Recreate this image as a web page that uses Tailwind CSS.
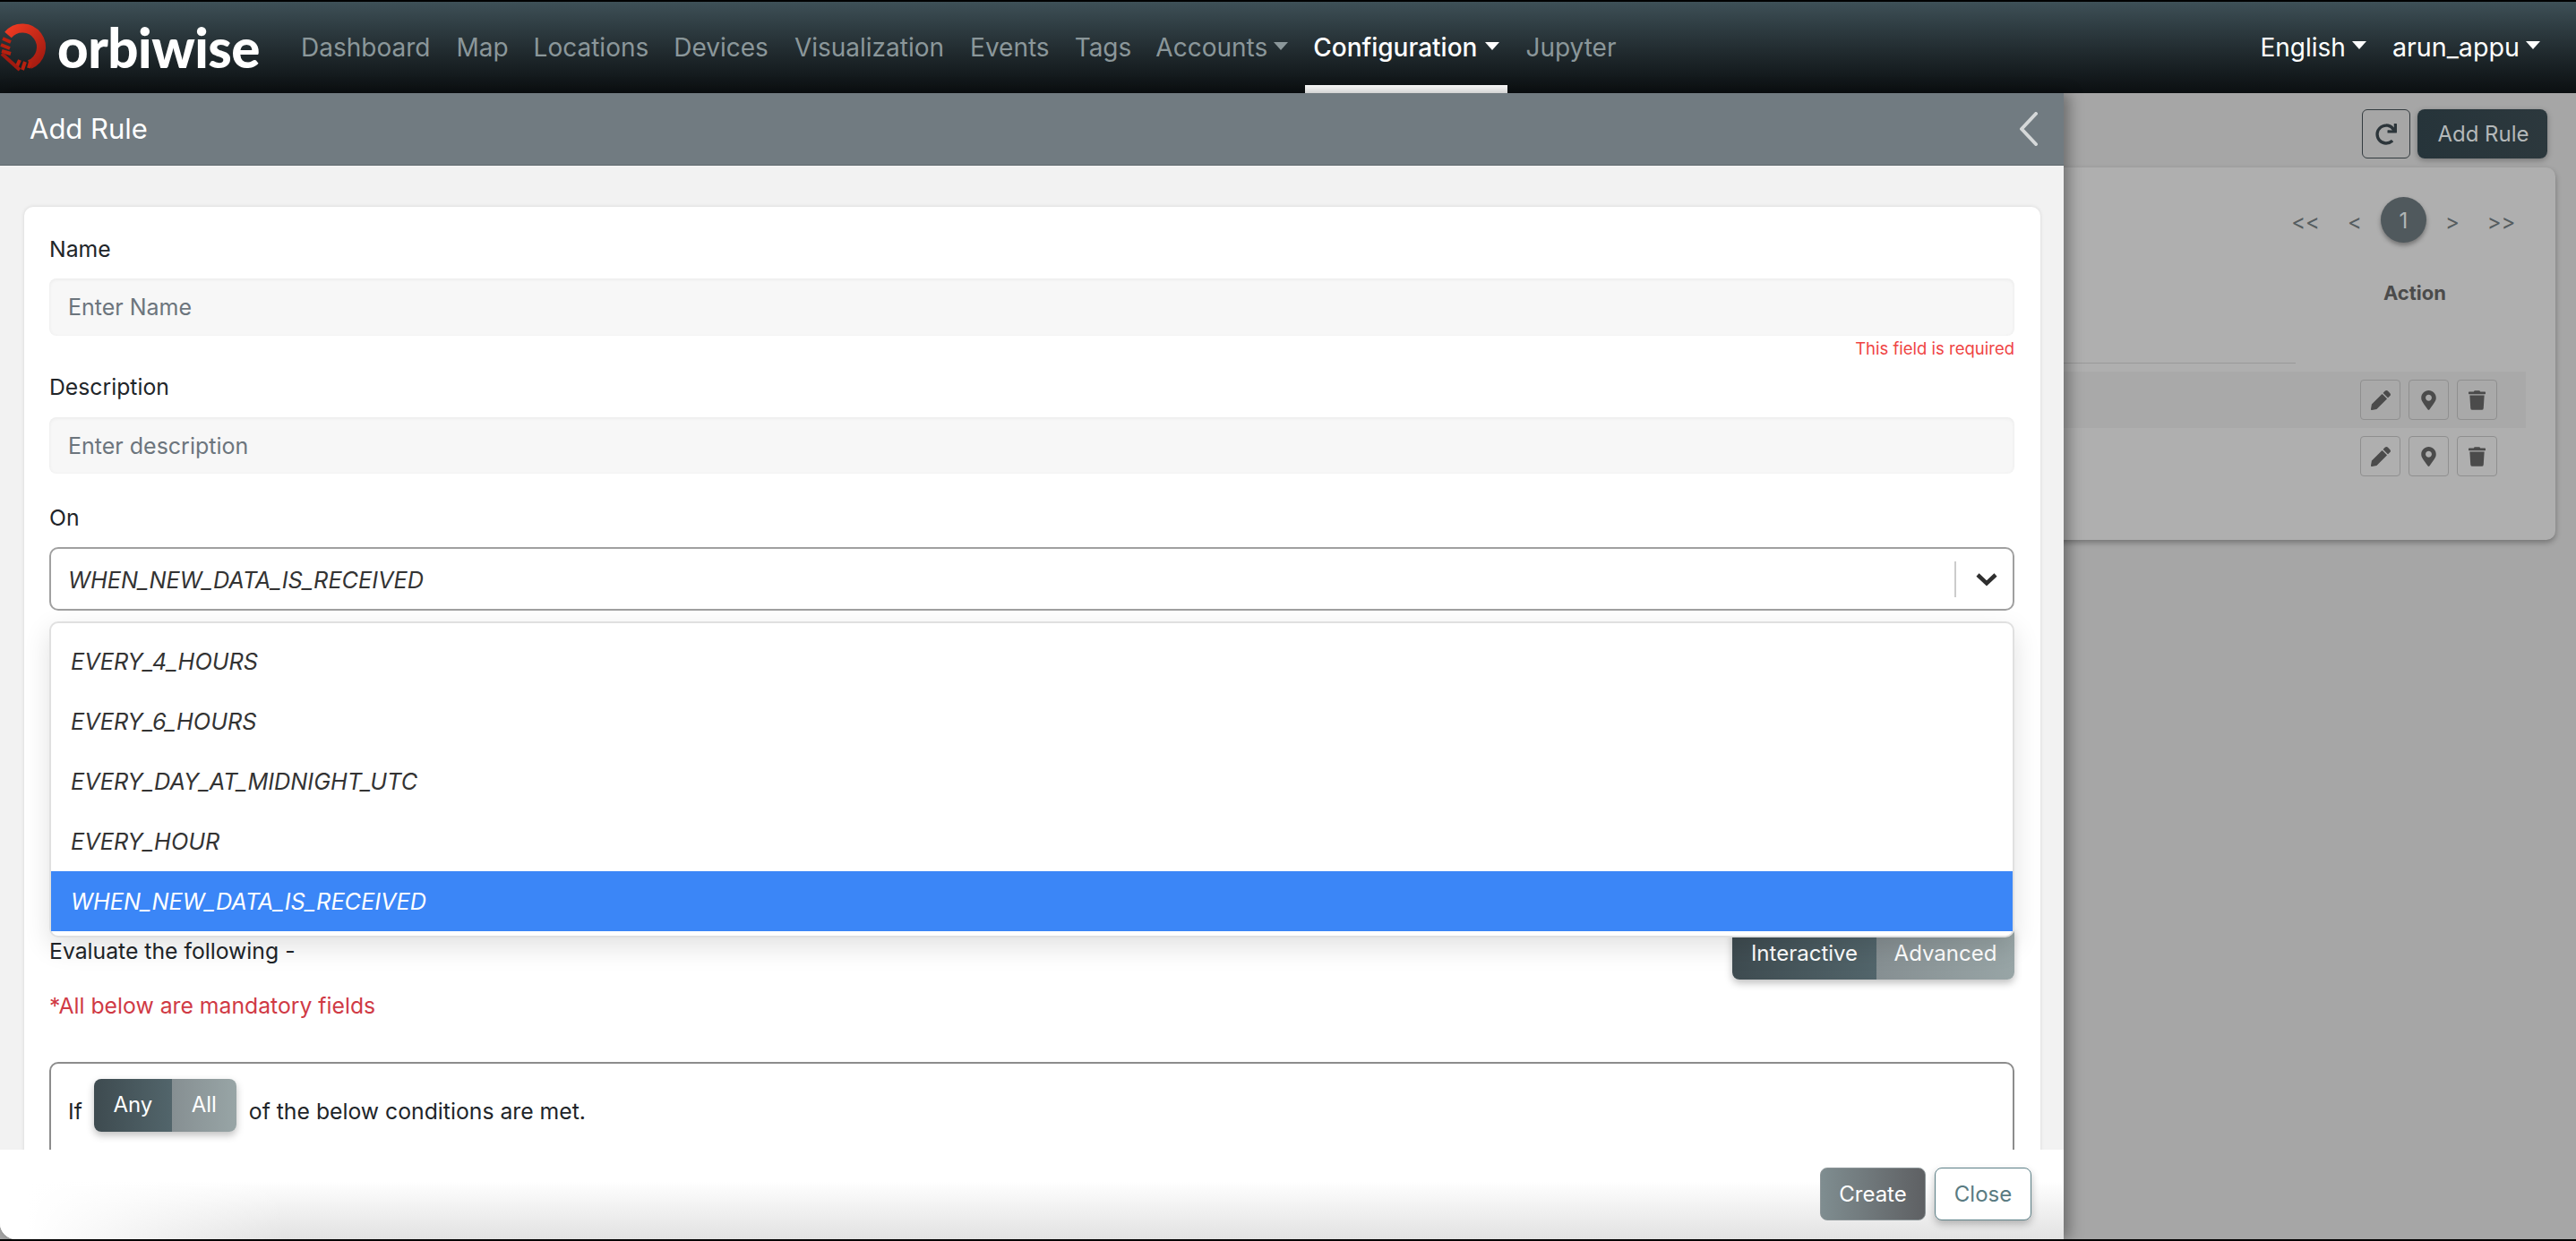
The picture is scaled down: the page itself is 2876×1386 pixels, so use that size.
<!DOCTYPE html>
<html lang="en">
<head>
  <meta charset="UTF-8" />
  <title>Orbiwise - Add Rule</title>
  <script src="https://cdn.jsdelivr.net/npm/@tailwindcss/browser@4"></script>
</head>
<body class="bg-black font-['Inter',sans-serif] text-[24px] text-[#212529]">
  <div class="relative h-[1386px] w-[2876px] overflow-hidden bg-black pt-[2px] pb-[2px]">

    <!-- Top bar -->
    <nav class="flex h-[102px] items-center bg-gradient-to-b from-[#3e5057] to-[#0b0f11] pr-[40px] text-[28px]">
      <div class="flex w-[321px] items-center">
        <svg class="h-[54px] w-[54px] shrink-0" viewBox="0 0 54 54">
          <defs>
            <linearGradient id="ring" x1="0" y1="0" x2="1" y2="1">
              <stop offset="0" stop-color="#ee3a22" />
              <stop offset="1" stop-color="#a01a10" />
            </linearGradient>
          </defs>
          <path d="M9 13 A21 21 0 1 1 33 46" fill="none" stroke="url(#ring)" stroke-width="10" />
          <path d="M3 17 L12 21 M1 24 L11 28 M2 31 L12 34 M18 50 L22 41 M25 52 L28 43 M32 50 L34 43" fill="none" stroke="#b8200f" stroke-width="4" />
          <path d="M2 34 L22 52" fill="none" stroke="#a01a10" stroke-width="4" />
        </svg>
        <span class="ml-[10px] font-['Lato',sans-serif] text-[60px] leading-none font-black tracking-[-0.5px] text-white">orbiwise</span>
      </div>
      <a class="px-[15px] text-[#8b979a]">Dashboard</a>
      <a class="px-[14px] text-[#8b979a]">Map</a>
      <a class="px-[14px] text-[#8b979a]">Locations</a>
      <a class="px-[14px] text-[#8b979a]">Devices</a>
      <a class="px-[15px] text-[#8b979a]">Visualization</a>
      <a class="px-[14px] text-[#8b979a]">Events</a>
      <a class="px-[14px] text-[#8b979a]">Tags</a>
      <a class="flex items-center gap-[7px] pr-[14px] pl-[13px] text-[#8b979a]">Accounts <i class="mt-[-4px] border-x-[8px] border-t-[9px] border-x-transparent border-t-[#8b979a]"></i></a>
      <a class="relative ml-[5px] flex h-full items-center gap-[9px] px-[9px] font-medium text-white">Configuration <i class="mt-[-4px] border-x-[8px] border-t-[9px] border-x-transparent border-t-white"></i>
        <span class="absolute right-0 bottom-0 left-0 h-[9px] bg-white"></span>
      </a>
      <a class="px-[20px] text-[#8b979a]">Jupyter</a>
      <div class="ml-auto flex items-center gap-[29px] text-white">
        <a class="flex items-center gap-[7px]">English <i class="mt-[-4px] border-x-[8px] border-t-[9px] border-x-transparent border-t-white"></i></a>
        <a class="flex items-center gap-[7px] text-[28.7px]">arun_appu <i class="mt-[-4px] border-x-[8px] border-t-[9px] border-x-transparent border-t-white"></i></a>
      </div>
    </nav>

    <!-- Page behind the panel -->
    <main class="h-[1280px] bg-[#a6a6a6] pt-[18px]">
      <div class="flex justify-end gap-[8px] pr-[32px]">
        <button class="flex h-[55px] w-[54px] items-center justify-center rounded-[6px] border border-[#333b3f]">
          <svg class="h-[24px] w-[24px] fill-[#2c353a]" viewBox="0 0 512 512"><path d="M500.33 0h-47.41a12 12 0 0 0-12 12.57l4 82.76A247.42 247.42 0 0 0 256 8C119.34 8 7.9 119.53 8 256.19 8.1 393.07 119.1 504 256 504a247.1 247.1 0 0 0 166.18-63.91 12 12 0 0 0 .48-17.43l-34-34a12 12 0 0 0-16.38-.55A176 176 0 1 1 402.1 157.8l-101.53-4.87a12 12 0 0 0-12.57 12v47.41a12 12 0 0 0 12 12h200.33a12 12 0 0 0 12-12V12a12 12 0 0 0-12-12z" /></svg>
        </button>
        <button class="h-[55px] w-[145px] rounded-[8px] bg-gradient-to-r from-[#26343a] to-[#2c383d] pl-[2px] text-[#b4b8b9] shadow-[0_2px_6px_rgba(0,0,0,0.3)]">Add Rule</button>
      </div>

      <section class="mt-[10px] mr-[23px] ml-[1400px] h-[416px] rounded-[10px] bg-[#afafaf] pt-[33px] shadow-[0_3px_6px_rgba(0,0,0,0.3)]">
        <div class="flex items-center justify-end pr-[46px] text-[#555d60]">
          <span class="mt-[5px] mr-[34px] flex w-[28px] justify-center">&lt;&lt;</span>
          <span class="mt-[5px] mr-[22px] flex w-[14px] justify-center">&lt;</span>
          <span class="flex h-[51px] w-[51px] items-center justify-center rounded-full bg-[#50595d] pt-[2px] text-[#b0b5b6] shadow-[0_3px_5px_rgba(0,0,0,0.35)]">1</span>
          <span class="mt-[5px] ml-[22px] flex w-[14px] justify-center">&gt;</span>
          <span class="mt-[5px] ml-[33px] flex w-[29px] justify-center">&gt;&gt;</span>
        </div>
        <div class="mt-[42px] flex justify-end pr-[122px] text-[22px] leading-[28px] font-bold text-[#4b4b4b]">Action</div>
        <div class="mt-[64px] mr-[290px] h-[1px] bg-[#999999]"></div>

        <div class="mt-[9px] mr-[33px] flex h-[63px] items-center justify-end gap-[9px] bg-[#a9a9a9] pr-[32px]">
          <span class="flex h-[45px] w-[45px] items-center justify-center rounded-[4px] border border-[#8f8f8f]">
            <svg class="h-[22px] w-[22px] fill-[#4b4b4b]" viewBox="0 0 512 512"><path d="M497.9 142.1l-46.1 46.1c-4.7 4.7-12.3 4.7-17 0l-111-111c-4.7-4.7-4.7-12.3 0-17l46.1-46.1c18.7-18.7 49.1-18.7 67.9 0l60.1 60.1c18.8 18.7 18.8 49.1 0 67.9zM284.2 99.8L21.6 362.4.4 483.9c-2.9 16.4 11.4 30.6 27.8 27.8l121.5-21.3 262.6-262.6c4.7-4.7 4.7-12.3 0-17l-111-111c-4.8-4.7-12.4-4.7-17.1 0z" /></svg>
          </span>
          <span class="flex h-[45px] w-[45px] items-center justify-center rounded-[4px] border border-[#8f8f8f]">
            <svg class="h-[22px] w-[17px] fill-[#4b4b4b]" viewBox="0 0 384 512"><path d="M172.268 501.67C26.97 291.031 0 269.413 0 192 0 85.961 85.961 0 192 0s192 85.961 192 192c0 77.413-26.97 99.031-172.268 309.67-9.535 13.774-29.93 13.773-39.464 0zM192 272c44.183 0 80-35.817 80-80s-35.817-80-80-80-80 35.817-80 80 35.817 80 80 80z" /></svg>
          </span>
          <span class="flex h-[45px] w-[45px] items-center justify-center rounded-[4px] border border-[#8f8f8f]">
            <svg class="h-[22px] w-[19px] fill-[#4b4b4b]" viewBox="0 0 448 512"><path d="M432 32H312l-9.4-18.7A24 24 0 0 0 281.1 0H166.8a23.72 23.72 0 0 0-21.4 13.3L136 32H16A16 16 0 0 0 0 48v32a16 16 0 0 0 16 16h416a16 16 0 0 0 16-16V48a16 16 0 0 0-16-16zM53.2 467a48 48 0 0 0 47.9 45h245.8a48 48 0 0 0 47.9-45L416 128H32z" /></svg>
          </span>
        </div>
        <div class="mt-[9px] mr-[33px] flex h-[45px] items-center justify-end gap-[9px] pr-[32px]">
          <span class="flex h-[45px] w-[45px] items-center justify-center rounded-[4px] border border-[#8f8f8f]">
            <svg class="h-[22px] w-[22px] fill-[#4b4b4b]" viewBox="0 0 512 512"><path d="M497.9 142.1l-46.1 46.1c-4.7 4.7-12.3 4.7-17 0l-111-111c-4.7-4.7-4.7-12.3 0-17l46.1-46.1c18.7-18.7 49.1-18.7 67.9 0l60.1 60.1c18.8 18.7 18.8 49.1 0 67.9zM284.2 99.8L21.6 362.4.4 483.9c-2.9 16.4 11.4 30.6 27.8 27.8l121.5-21.3 262.6-262.6c4.7-4.7 4.7-12.3 0-17l-111-111c-4.8-4.7-12.4-4.7-17.1 0z" /></svg>
          </span>
          <span class="flex h-[45px] w-[45px] items-center justify-center rounded-[4px] border border-[#8f8f8f]">
            <svg class="h-[22px] w-[17px] fill-[#4b4b4b]" viewBox="0 0 384 512"><path d="M172.268 501.67C26.97 291.031 0 269.413 0 192 0 85.961 85.961 0 192 0s192 85.961 192 192c0 77.413-26.97 99.031-172.268 309.67-9.535 13.774-29.93 13.773-39.464 0zM192 272c44.183 0 80-35.817 80-80s-35.817-80-80-80-80 35.817-80 80 35.817 80 80 80z" /></svg>
          </span>
          <span class="flex h-[45px] w-[45px] items-center justify-center rounded-[4px] border border-[#8f8f8f]">
            <svg class="h-[22px] w-[19px] fill-[#4b4b4b]" viewBox="0 0 448 512"><path d="M432 32H312l-9.4-18.7A24 24 0 0 0 281.1 0H166.8a23.72 23.72 0 0 0-21.4 13.3L136 32H16A16 16 0 0 0 0 48v32a16 16 0 0 0 16 16h416a16 16 0 0 0 16-16V48a16 16 0 0 0-16-16zM53.2 467a48 48 0 0 0 47.9 45h245.8a48 48 0 0 0 47.9-45L416 128H32z" /></svg>
          </span>
        </div>
      </section>
    </main>

    <!-- Slide-over panel -->
    <aside class="absolute top-[104px] bottom-[2px] left-0 flex w-[2304px] flex-col rounded-bl-[18px] bg-[#f2f2f2] shadow-[6px_0_16px_rgba(0,0,0,0.35)]">
      <header class="flex h-[81px] shrink-0 items-center justify-between border-b border-[#5f696e] bg-[#717b81] pr-[28px] pl-[33px]">
        <h1 class="text-[31px] text-white">Add Rule</h1>
        <svg class="h-[38px] w-[22px]" viewBox="0 0 22 38" fill="none" stroke="#d5d8d9" stroke-width="4" stroke-linecap="round" stroke-linejoin="round"><path d="M19 2 L3 19 L19 36" /></svg>
      </header>

      <div class="min-h-0 flex-1 overflow-hidden pt-[46px] pr-[26px] pl-[27px]">
        <div class="h-[1100px] rounded-[10px] bg-white pt-[29px] pr-[29px] pl-[28px] text-[24.75px] shadow-[0_0_4px_rgba(0,0,0,0.12)]">
          <label class="mb-[15px] block h-[36px] leading-[36px]">Name</label>
          <input placeholder="Enter Name" class="block h-[64px] w-full rounded-[8px] bg-[#f7f7f7] px-[21px] text-[25px] shadow-[inset_0_1px_4px_rgba(0,0,0,0.06)] placeholder:text-[#6c757d]" />
          <p class="h-[26px] pt-[1px] text-right text-[18.5px] leading-[26px] text-[#ef4444]">This field is required</p>

          <label class="mt-[13px] mb-[16px] block h-[36px] leading-[36px]">Description</label>
          <input placeholder="Enter description" class="block h-[63px] w-full rounded-[8px] bg-[#f7f7f7] px-[21px] text-[25px] shadow-[inset_0_1px_4px_rgba(0,0,0,0.06)] placeholder:text-[#6c757d]" />

          <label class="mt-[31px] mb-[15px] block h-[36px] leading-[36px]">On</label>
          <div class="relative">
            <div class="flex h-[71px] items-center rounded-[10px] border-2 border-[#a0a0a0] bg-white pr-[15px] pl-[19px] text-[25.3px] italic text-[#333333]">
              <span class="flex-1 pt-[2px]">WHEN_NEW_DATA_IS_RECEIVED</span>
              <span class="h-[40px] w-[2px] bg-[#cccccc]"></span>
              <svg class="mr-[2px] ml-[22px] h-[16px] w-[24px]" viewBox="0 0 24 16" fill="none" stroke="#2f2f2f" stroke-width="4.5"><path d="M2 3 L12 12.5 L22 3" /></svg>
            </div>

            <ul class="absolute top-[83px] right-0 left-0 z-10 h-[353px] rounded-[10px] border-2 border-[#e0e0e0] bg-white pt-[9px] text-[25.3px] italic text-[#333333] shadow-[0_10px_30px_rgba(0,0,0,0.12)]">
              <li class="flex h-[67px] items-center pl-[22px]">EVERY_4_HOURS</li>
              <li class="flex h-[67px] items-center pl-[22px]">EVERY_6_HOURS</li>
              <li class="flex h-[67px] items-center pl-[22px]">EVERY_DAY_AT_MIDNIGHT_UTC</li>
              <li class="flex h-[67px] items-center pl-[22px]">EVERY_HOUR</li>
              <li class="flex h-[67px] items-center bg-[#3b86f7] pl-[22px] text-white">WHEN_NEW_DATA_IS_RECEIVED</li>
            </ul>
          </div>

          <div class="mt-[353px] flex h-[59px] items-center justify-between">
            <span class="mt-[-3px]">Evaluate the following -</span>
            <div class="flex h-[59px] overflow-hidden rounded-[8px] text-[24px] text-white shadow-[0_4px_8px_rgba(0,0,0,0.25)]">
              <span class="flex w-[161px] items-center justify-center bg-gradient-to-r from-[#3e4b50] to-[#52656b]">Interactive</span>
              <span class="flex w-[154px] items-center justify-center bg-gradient-to-r from-[#868f92] to-[#98a5a6]">Advanced</span>
            </div>
          </div>

          <p class="mt-[11px] h-[36px] leading-[36px] text-[#d03a45]">*All below are mandatory fields</p>

          <div class="mt-[45px] h-[300px] rounded-[10px] border-2 border-[#8c8c8c] px-[19px] pt-[17px]">
            <div class="flex items-start">
              <span class="mt-[18px] leading-[36px]">If</span>
              <div class="ml-[13px] flex h-[59px] overflow-hidden rounded-[8px] text-[24px] text-white shadow-[0_4px_8px_rgba(0,0,0,0.25)]">
                <span class="flex w-[87px] items-center justify-center bg-gradient-to-r from-[#3e4b50] to-[#52656b] pb-[1px]">Any</span>
                <span class="flex w-[72px] items-center justify-center bg-gradient-to-r from-[#868f92] to-[#98a5a6] pb-[1px]">All</span>
              </div>
              <span class="mt-[18px] ml-[14px] leading-[36px]">of the below conditions are met.</span>
            </div>
          </div>
        </div>
      </div>

      <footer class="relative flex h-[100px] shrink-0 items-start justify-end gap-[10px] overflow-hidden rounded-bl-[18px] bg-gradient-to-b from-white from-35% to-[#e2e2e2] pt-[20px] pr-[36px]">
        <span class="absolute top-0 bottom-0 left-0 w-[320px] bg-gradient-to-r from-white from-10% to-transparent"></span>
        <button class="relative h-[59px] w-[118px] rounded-[8px] border border-[#8b9497] bg-gradient-to-r from-[#7f8d90] to-[#5e6063] text-white">Create</button>
        <button class="relative h-[59px] w-[108px] rounded-[8px] border border-[#5d8188] bg-white text-[#5a7b82] shadow-[0_4px_8px_rgba(0,0,0,0.25)]">Close</button>
      </footer>
    </aside>
  </div>
</body>
</html>
